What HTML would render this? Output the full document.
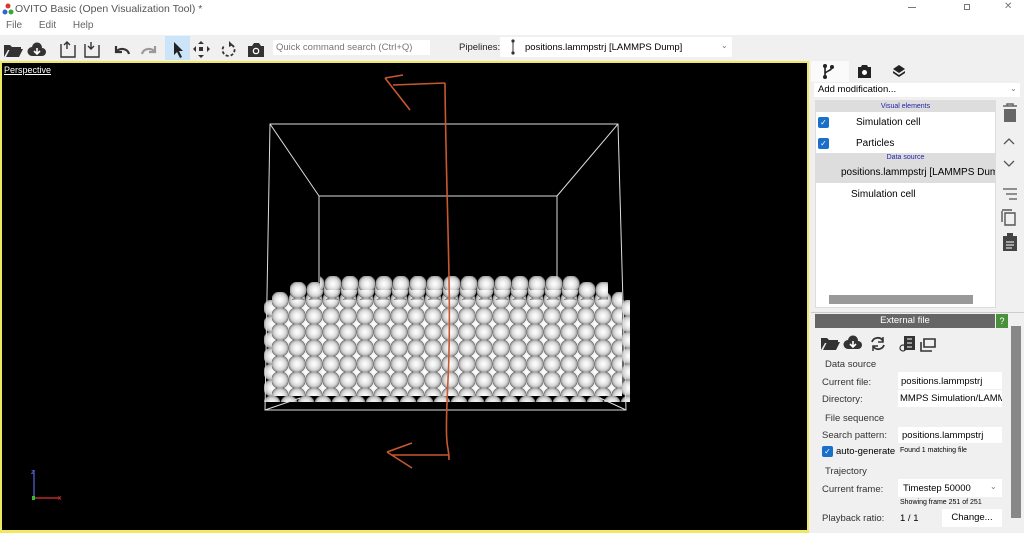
<!DOCTYPE html>
<html><head><meta charset="utf-8"><style>
*{margin:0;padding:0;box-sizing:border-box}
body{width:1024px;height:533px;overflow:hidden;background:#f0f0f0;font-family:"Liberation Sans",sans-serif;font-size:10px;color:#000;position:relative}
.a{position:absolute}
.t{color:#333;font-size:11px}
.inp{background:#fff;position:absolute}
.cb{position:absolute;width:11px;height:11px;background:#1a6fc9;border-radius:2px;color:#fff;font-size:8px;line-height:11px;text-align:center}
.pile{position:absolute;
background-image:radial-gradient(circle at 8px 8px,#fff 0,#f0f0f0 3px,#d4d4d4 6px,#a0a0a0 8px,#555 8.6px,transparent 9px);
background-size:17px 16px}
.ic{position:absolute;font-size:16px;color:#333}
</style></head><body>
<div class="a" style="left:0;top:0;width:1024px;height:18px;background:#fff"></div>
<svg class="a" style="left:2px;top:3px" width="12" height="12"><circle cx="6" cy="3" r="2.5" fill="#d33"/><circle cx="3" cy="9" r="2.5" fill="#36c"/><circle cx="9" cy="9" r="2.5" fill="#3a3"/></svg>
<div class="a" style="left:15px;top:3px;font-size:10.5px;color:#555">OVITO Basic (Open Visualization Tool) *</div>
<div class="a" style="left:908px;top:7px;width:8px;height:1px;background:#777"></div>
<div class="a" style="left:964px;top:4px;width:6px;height:6px;border:1px solid #777"></div>
<div class="a" style="left:1004px;top:1px;font-size:10px;color:#777">✕</div>
<div class="a" style="left:0;top:18px;width:1024px;height:17px;background:#fff"></div>
<div class="a" style="left:6px;top:20px;color:#666;font-size:10px;word-spacing:14px">File Edit Help</div>
<div class="a" style="left:0;top:35px;width:1024px;height:26px;background:#f0f0f0"></div>
<svg class="a" style="left:0;top:36px" width="270" height="24">
<g fill="#333">
<path d="M4 9h6l2 2h9v3H8l-4 7z M6 21l4-8h13l-4 8z"/>
<path d="M32 11a5 5 0 0 1 10 1a4 4 0 0 1 0 8h-10a4.5 4.5 0 0 1 0-9z"/>
</g>
<path d="M37 12v6M34 15l3 3l3-3" stroke="#fff" stroke-width="1.6" fill="none"/>
<g stroke="#333" stroke-width="1.4" fill="none">
<path d="M61 8v13h14v-12M67 6v7M64 9l3-3l3 3"/>
<path d="M85 8v13h14v-12M91 6v7M88 10l3 3l3-3"/>
<path d="M116 16a7 6 0 0 1 13 2M116 10v6h6" stroke-width="2.2"/>
<path d="M155 16a7 6 0 0 0-13 2M155 10v6h-6" stroke="#999" stroke-width="2.2"/>
</g>
<rect x="165" y="0" width="25" height="24" fill="#cce4f7"/>
<path d="M174 6v13l3-3l3 6l2-1l-3-6h4z" fill="#222"/>
<path d="M201 5l3 3h-6zM201 22l3-3h-6zM193 13l3-3v6zM210 13l-3-3v6z M199 11h4v4h-4z" fill="#333"/>
<path d="M232 9a6 6 0 1 1-8 1" stroke="#333" stroke-width="1.8" fill="none" stroke-dasharray="3 2"/>
<path d="M229 5l4 4l-4 2z" fill="#333"/>
<path d="M248 10h4l2-3h5l2 3h3v11h-16z" fill="#333"/><circle cx="256" cy="15" r="3.3" fill="#fff"/><circle cx="256" cy="15" r="2" fill="#333"/>
</svg>
<div class="inp" style="left:273px;top:40px;width:157px;height:15px"></div>
<div class="a" style="left:276px;top:42px;color:#777;font-size:9.5px">Quick command search (Ctrl+Q)</div>
<div class="a" style="left:459px;top:42px;color:#222;font-size:9.5px">Pipelines:</div>
<div class="inp" style="left:500px;top:37px;width:232px;height:20px"></div>
<svg class="a" style="left:510px;top:39px" width="6" height="16"><path d="M3 2v12" stroke="#333"/><circle cx="3" cy="2" r="1.6" fill="#333"/><circle cx="3" cy="14" r="1.6" fill="#333"/></svg>
<div class="a" style="left:525px;top:42px;font-size:9.5px">positions.lammpstrj [LAMMPS Dump]</div>
<div class="a" style="left:721px;top:41px;font-size:8px;color:#777">⌄</div>
<!-- viewport -->
<div class="a" style="left:0;top:61px;width:809px;height:472px;background:#000;border:2px solid #f0e860;border-bottom-width:3px"></div>
<div class="a" style="left:4px;top:65px;color:#fff;font-size:9px;text-decoration:underline">Perspective</div>
<div class="a" style="left:272px;top:300px;width:352px;height:92px;background:#666"></div>
<div class="pile" style="left:264px;top:300px;width:366px;height:102px"></div>
<div class="pile" style="left:272px;top:292px;width:350px;height:104px;background-position:0 0"></div>
<div class="pile" style="left:290px;top:282px;width:318px;height:18px"></div>
<div class="pile" style="left:320px;top:276px;width:260px;height:14px;background-position:5px 0"></div>
<svg class="a" style="left:0;top:0" width="809" height="533">
<g stroke="#ddd" stroke-width="1" fill="none">
<path d="M270 124H618L626 410H265Z"/>
<path d="M319 196H557V282M319 196V282"/>
<path d="M270 124L319 196M618 124L557 196"/>
<path d="M265 410L300 398M626 410L600 398"/>
</g>
<g stroke="#c8582e" stroke-width="1.6" fill="none">
<path d="M445 83C446 200 452 300 448 380S449 440 449 460"/>
<path d="M445 83L393 85M385 78L410 110M385 78L403 75"/>
<path d="M449 455L392 455M387 452L412 443M387 452L412 468"/>
</g>
<path d="M34 498V470" stroke="#5566dd" stroke-width="1.2"/>
<path d="M34 498H60" stroke="#dd3333" stroke-width="1.2"/>
<text x="31" y="474" fill="#6677ee" font-size="7" font-family="Liberation Sans">z</text>
<text x="58" y="500" fill="#ee3333" font-size="7" font-family="Liberation Sans">x</text>
<rect x="32" y="496" width="3" height="4" fill="#3b3"/>
</svg>
<!-- right panel -->
<div class="a" style="left:811px;top:61px;width:38px;height:21px;background:#fafafa"></div>
<svg class="a" style="left:811px;top:61px" width="100" height="21">
<g fill="#222"><circle cx="14" cy="5" r="2"/><circle cx="14" cy="16" r="2"/><circle cx="21" cy="6" r="2"/></g>
<path d="M14 5v11M21 6c0 4-7 4-7 7" stroke="#222" stroke-width="1.6" fill="none"/>
<path d="M47 6h3l1-2h5l1 2h3v11h-13z" fill="#222"/><circle cx="53.5" cy="11.5" r="2.5" fill="#fff"/>
<path d="M88 4l6 4l-6 4l-6-4z M82 10l6 4l6-4v2l-6 4l-6-4z" fill="#222"/>
</svg>
<div class="inp" style="left:814px;top:83px;width:206px;height:14px"></div>
<div class="a" style="left:818px;top:84px;font-size:9.5px">Add modification...</div>
<div class="a" style="left:1010px;top:84px;font-size:8px;color:#777">⌄</div>
<div class="inp" style="left:815px;top:100px;width:181px;height:208px;border:1px solid #ddd"></div>
<div class="a" style="left:816px;top:101px;width:179px;height:11px;background:#ddd;color:#22a;font-size:7px;text-align:center;line-height:11px">Visual elements</div>
<div class="cb" style="left:818px;top:117px">✓</div>
<div class="a" style="left:856px;top:117px;font-size:10px">Simulation cell</div>
<div class="cb" style="left:818px;top:138px">✓</div>
<div class="a" style="left:856px;top:138px;font-size:10px">Particles</div>
<div class="a" style="left:816px;top:153px;width:179px;height:10px;background:#ddd;color:#22a;font-size:7px;text-align:center;line-height:10px">Data source</div>
<div class="a" style="left:816px;top:163px;width:179px;height:20px;background:#ddd;overflow:hidden;white-space:nowrap;padding-left:25px;line-height:20px;font-size:10px">positions.lammpstrj [LAMMPS Dump]</div>
<div class="a" style="left:851px;top:189px;font-size:10px">Simulation cell</div>
<div class="a" style="left:829px;top:295px;width:144px;height:9px;background:#999"></div>
<svg class="a" style="left:998px;top:100px" width="24" height="155">
<path d="M5 6h14M9 6v-2h6v2" stroke="#666" stroke-width="1.5" fill="none"/>
<path d="M6 9h12v13h-12z" fill="#666"/>
<path d="M6 44l5-5l5 5M6 61l5 5l5-5" stroke="#555" stroke-width="1.3" fill="none"/>
<path d="M5 89h14M8 94h11M11 99h8" stroke="#555" stroke-width="1.3"/>
<path d="M7 113h10v12h-10z M4 110h10" stroke="#555" stroke-width="1.4" fill="none"/>
<path d="M4 111v11" stroke="#555" stroke-width="1.4"/>
<path d="M5 136h14v15h-14z" fill="#444"/><rect x="9" y="133" width="6" height="4" fill="#444"/>
<path d="M8 142h8M8 145h8M8 148h6" stroke="#fff"/>
</svg>
<div class="a" style="left:811px;top:312px;width:213px;height:1px;background:#ccc"></div>
<div class="a" style="left:815px;top:314px;width:180px;height:14px;background:#666;color:#fff;font-size:9.5px;text-align:center;line-height:14px">External file</div>
<div class="a" style="left:996px;top:314px;width:12px;height:14px;background:#4a8f3c;color:#fff;font-size:9px;text-align:center;line-height:14px">?</div>
<div class="a" style="left:1011px;top:326px;width:10px;height:192px;background:#888"></div>
<svg class="a" style="left:818px;top:332px" width="124" height="22">
<g fill="#333">
<path d="M3 6h6l2 2h9v3H7l-4 7z M5 18l4-8h13l-4 8z"/>
<path d="M30 8a5 5 0 0 1 10 1a4 4 0 0 1 0 8h-10a4.5 4.5 0 0 1 0-9z"/>
<path d="M86 4h11v14h-11z"/>
</g>
<path d="M35 9v6M32 12l3 3l3-3" stroke="#fff" stroke-width="1.6" fill="none"/>
<path d="M54 10a6 6 0 0 1 11-1M66 13a6 6 0 0 1-11 1" stroke="#333" stroke-width="1.8" fill="none"/>
<path d="M65 5v5h-5M55 19v-5h5" stroke="#333" stroke-width="1.5" fill="none"/>
<path d="M89 7h5M89 11h5M89 15h5" stroke="#fff"/>
<circle cx="85" cy="16" r="3" stroke="#333" fill="none" stroke-width="1.2"/>
<path d="M106 7h11v8h-11z M103 10v9h11" stroke="#333" stroke-width="1.6" fill="none"/>
</svg>
<div class="a t" style="left:825px;top:359px;font-size:9.5px">Data source</div>
<div class="a t" style="left:822px;top:377px;font-size:9.5px">Current file:</div>
<div class="inp" style="left:898px;top:372px;width:104px;height:17px"></div>
<div class="a" style="left:901px;top:376px;font-size:9.5px">positions.lammpstrj</div>
<div class="a t" style="left:822px;top:394px;font-size:9.5px">Directory:</div>
<div class="inp" style="left:898px;top:390px;width:104px;height:17px;overflow:hidden;white-space:nowrap;font-size:9.5px;padding:3px 0 0 2px">MMPS Simulation/LAMMPS</div>
<div class="a t" style="left:825px;top:413px;font-size:9.5px">File sequence</div>
<div class="a t" style="left:822px;top:430px;font-size:9.5px">Search pattern:</div>
<div class="inp" style="left:898px;top:427px;width:104px;height:16px"></div>
<div class="a" style="left:902px;top:430px;font-size:9.5px">positions.lammpstrj</div>
<div class="cb" style="left:822px;top:446px">✓</div>
<div class="a" style="left:836px;top:446px;font-size:9.5px">auto-generate</div>
<div class="a" style="left:900px;top:447px;font-size:7px">Found 1 matching file</div>
<div class="a t" style="left:825px;top:466px;font-size:9.5px">Trajectory</div>
<div class="a t" style="left:822px;top:484px;font-size:9.5px">Current frame:</div>
<div class="inp" style="left:898px;top:479px;width:104px;height:18px"></div>
<div class="a" style="left:903px;top:483px;font-size:9.5px">Timestep 50000</div>
<div class="a" style="left:990px;top:482px;font-size:8px;color:#777">⌄</div>
<div class="a" style="left:900px;top:499px;font-size:7px">Showing frame 251 of 251</div>
<div class="a t" style="left:822px;top:513px;font-size:9.5px">Playback ratio:</div>
<div class="a" style="left:900px;top:513px;font-size:9.5px">1 / 1</div>
<div class="inp" style="left:942px;top:509px;width:60px;height:18px;text-align:center;font-size:9.5px;padding-top:3px">Change...</div>
</body></html>
